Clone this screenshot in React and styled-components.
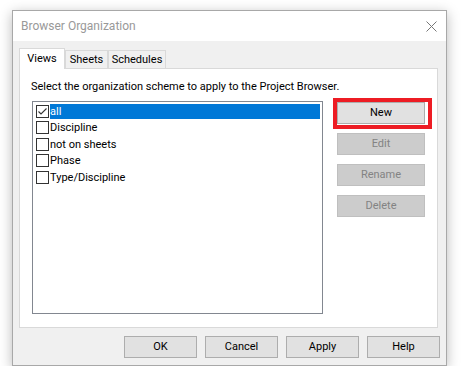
import React from "react";
import styled, { createGlobalStyle } from "styled-components";

const GlobalStyle = createGlobalStyle`
  html, body {
    margin: 0;
    background: #ffffff;
  }
  body {
    font-family: Roboto, "Liberation Sans", sans-serif;
    font-size: 11px;
    color: #000000;
  }
`;

const schemes = [
  { name: "all", checked: true, selected: true },
  { name: "Discipline" },
  { name: "not on sheets" },
  { name: "Phase" },
  { name: "Type/Discipline" }
];

const tabs = [
  { label: "Views", width: 46, active: true },
  { label: "Sheets", width: 43 },
  { label: "Schedules", width: 58 }
];

const CloseIcon = () => (
  <svg width="11" height="11" viewBox="0 0 11 11">
    <path d="M0.5 0.5 L10.5 10.5 M10.5 0.5 L0.5 10.5" stroke="#777777" strokeWidth="1" fill="none" />
  </svg>
);

const CheckMark = () => (
  <svg width="11" height="11" viewBox="0 0 11 11">
    <path d="M1.5 5.5 L4 8 L9.5 2.5" stroke="#333333" strokeWidth="1.1" fill="none" />
  </svg>
);

export default function App() {
  return (
    <Page>
      <GlobalStyle />
      <Window>
        <TitleBar>
          <Title>Browser Organization</Title>
          <CloseButton>
            <CloseIcon />
          </CloseButton>
        </TitleBar>

        <Body>
          <TabStrip>
            {tabs.map(t => (
              <Tab key={t.label} $active={t.active} $w={t.width}>
                {t.label}
              </Tab>
            ))}
          </TabStrip>

          <Panel>
            <Hint>Select the organization scheme to apply to the Project Browser.</Hint>
            <PanelRow>
              <SchemeList>
                {schemes.map(s => (
                  <SchemeRow key={s.name}>
                    <CheckBox>{s.checked && <CheckMark />}</CheckBox>
                    <SchemeLabel $selected={s.selected}>{s.name}</SchemeLabel>
                  </SchemeRow>
                ))}
              </SchemeList>

              <SideButtons>
                <Marked>
                  <Button>New</Button>
                  <RedFrame />
                </Marked>
                <Button disabled>Edit</Button>
                <Button disabled>Rename</Button>
                <Button disabled>Delete</Button>
              </SideButtons>
            </PanelRow>
          </Panel>

          <Footer>
            <Button $wide>OK</Button>
            <Button $wide>Cancel</Button>
            <Button $wide>Apply</Button>
            <Button $wide>Help</Button>
          </Footer>
        </Body>
      </Window>
    </Page>
  );
}

const Page = styled.div`
  padding: 10px 0 0 12px;
`;

const Window = styled.div`
  box-sizing: border-box;
  width: 435px;
  height: 356px;
  border: 1px solid #a8a8a8;
  background: #f0f0f0;
  box-shadow: 0 3px 12px rgba(0, 0, 0, 0.28);
  display: flex;
  flex-direction: column;
`;

const TitleBar = styled.div`
  height: 30px;
  background: #ffffff;
  display: flex;
  align-items: center;
  justify-content: space-between;
  padding: 0 9px 0 8px;
`;

const Title = styled.span`
  color: #999999;
  font-size: 12px;
`;

const CloseButton = styled.span`
  display: flex;
  width: 11px;
  height: 11px;
`;

const Body = styled.div`
  flex: 1;
  display: flex;
  flex-direction: column;
  padding: 7px 6px 0 6px;
`;

const TabStrip = styled.div`
  display: flex;
  align-items: flex-end;
  height: 21px;
  margin-bottom: -1px;
  position: relative;
  z-index: 1;
`;

const Tab = styled.div`
  box-sizing: border-box;
  width: ${p => p.$w}px;
  height: ${p => (p.$active ? 21 : 18)}px;
  margin-bottom: ${p => (p.$active ? 0 : 1)}px;
  border: 1px solid #d9d9d9;
  border-bottom: none;
  background: ${p => (p.$active ? "#ffffff" : "#f0f0f0")};
  padding-top: ${p => (p.$active ? 1 : 0)}px;
  text-align: center;
  line-height: 17px;
  white-space: nowrap;
`;

const Panel = styled.div`
  box-sizing: border-box;
  height: 260px;
  margin-right: 2px;
  background: #ffffff;
  border: 1px solid #d9d9d9;
  padding: 10px 0 0 12px;
  display: flex;
  flex-direction: column;
`;

const Hint = styled.div`
  line-height: 16px;
  margin-left: -1px;
  white-space: nowrap;
`;

const PanelRow = styled.div`
  display: flex;
  margin-top: 6px;
`;

const SchemeList = styled.div`
  box-sizing: border-box;
  width: 291px;
  height: 213px;
  border: 1px solid #828790;
  padding: 1px;
  background: #ffffff;
`;

const SchemeRow = styled.div`
  display: flex;
  align-items: center;
  height: 16.5px;
`;

const CheckBox = styled.span`
  box-sizing: border-box;
  width: 13px;
  height: 13px;
  margin-left: 2px;
  margin-right: 1px;
  border: 1px solid #333333;
  background: #ffffff;
  display: flex;
  align-items: center;
  justify-content: center;
  flex-shrink: 0;
`;

const SchemeLabel = styled.span`
  flex: 1;
  height: 15px;
  line-height: 15px;
  margin-right: 1px;
  background: ${p => (p.$selected ? "#0078d7" : "transparent")};
  color: ${p => (p.$selected ? "#ffffff" : "#000000")};
`;

const SideButtons = styled.div`
  display: flex;
  flex-direction: column;
  gap: 9px;
  margin-left: 14px;
  padding-top: 1px;
  width: 88px;
`;

const Marked = styled.div`
  position: relative;
  display: flex;
`;

const RedFrame = styled.span`
  position: absolute;
  top: -4px;
  left: -4px;
  right: -7px;
  bottom: -5px;
  border: 4px solid #ed1c24;
  pointer-events: none;
`;

const Button = styled.button`
  box-sizing: border-box;
  width: ${p => (p.$wide ? 73 : 88)}px;
  height: 22px;
  padding: 0;
  border: 1px solid ${p => (p.disabled ? "#bfbfbf" : "#adadad")};
  background: ${p => (p.disabled ? "#cccccc" : "#e1e1e1")};
  color: ${p => (p.disabled ? "#838383" : "#000000")};
  font-family: inherit;
  font-size: 11px;
  line-height: 18px;
`;

const Footer = styled.div`
  display: flex;
  justify-content: flex-end;
  gap: 8px;
  margin-top: 8px;
`;
